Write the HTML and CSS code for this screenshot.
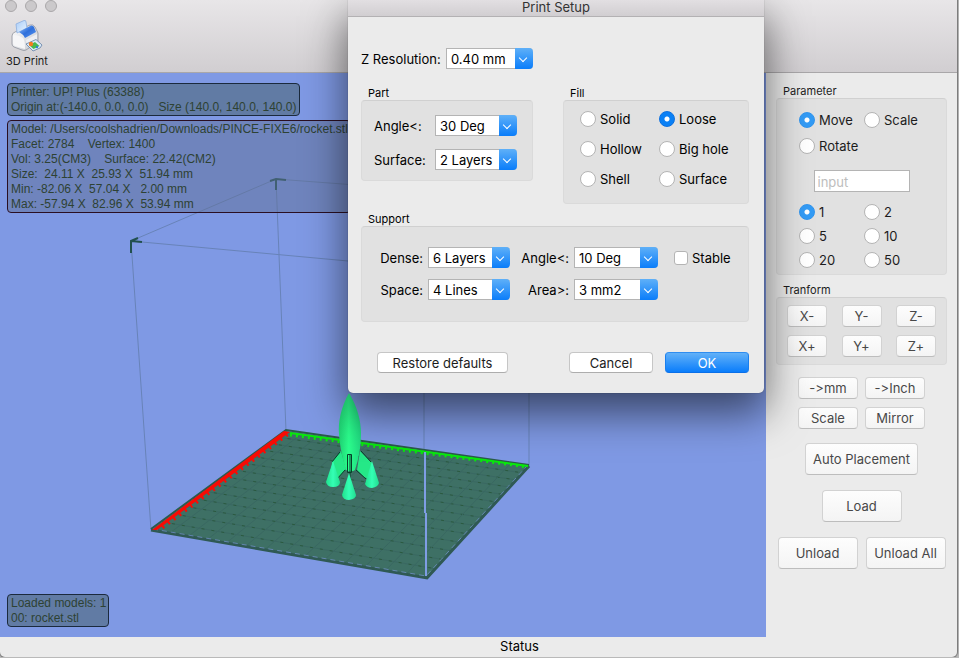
FILE: index.html
```html
<!DOCTYPE html>
<html lang="en">
<head>
<meta charset="utf-8">
<title>UP! Print Setup</title>
<link rel="stylesheet" href="styles.css">
</head>
<body>
<div class="window">
  <header class="toolbar">
    <div class="lights"><i></i><i></i><i></i></div>
    <button class="tool" type="button">
      <svg width="32" height="32" viewBox="0 0 32 32" aria-hidden="true">
        <defs>
          <linearGradient id="paper" x1="0" y1="0" x2="1" y2="1"><stop offset="0" stop-color="#a9cdf8"/><stop offset="1" stop-color="#e9f4ff"/></linearGradient>
          <linearGradient id="lid" x1="0" y1="0" x2="1" y2="1"><stop offset="0" stop-color="#8fc0fb"/><stop offset=".5" stop-color="#2f6fdb"/><stop offset="1" stop-color="#5a98f2"/></linearGradient>
          <linearGradient id="shell" x1="0" y1="0" x2="1" y2="1"><stop offset="0" stop-color="#fff"/><stop offset="1" stop-color="#c3c6ce"/></linearGradient>
        </defs>
        <path d="M1 16 Q1 13 4 12 L19 5 Q22 4 24 7 L27 13 L27 22 L15 30 Q13 31 11 30 L3 27 Q1 26 1 24Z" fill="url(#shell)" stroke="#8f939d" stroke-width=".8"/>
        <path d="M2 15 Q8 15 12 18 Q14 20 14 29 L4 26 Q2 25 2 23Z" fill="#f6f6f8"/>
        <path d="M15 20 L26 14 L26 20 L16 26Z" fill="#eeeff3"/>
        <path d="M5 4 L13 .5 Q15 0 15 2 L16 8 L6 13Z" fill="url(#paper)" stroke="#8cafe0" stroke-width=".8"/>
        <path d="M8 12 L20 5.500 Q22 5 23 7 L25 12 L14 18 Q12 14 8 12Z" fill="url(#lid)"/>
        <path d="M15 24 L25 19.500 L31 25 L29 28 L22 31Z" fill="#dceafa" stroke="#5f7da2" stroke-width=".8"/>
        <path d="M18 25 L24 22 L28.500 26 L22.500 29Z" fill="#49ba4e"/>
        <circle cx="20" cy="24" r="2.200" fill="#f47b20"/>
        <circle cx="26" cy="27" r="1.200" fill="#2f7fd0"/>
      </svg>
      <span>3D Print</span>
    </button>
  </header>

  <main class="main">
    <section class="viewport">
      <svg class="scene" viewBox="0 73 766 564" aria-hidden="true">
        <defs>
          <linearGradient id="hull" x1="0" x2="1"><stop offset="0" stop-color="#1fd273"/><stop offset=".45" stop-color="#2cff8e"/><stop offset="1" stop-color="#1fd880"/></linearGradient>
          <linearGradient id="foot" x1="0" x2="1"><stop offset="0" stop-color="#20e08c"/><stop offset=".5" stop-color="#34ffb4"/><stop offset="1" stop-color="#22dd90"/></linearGradient>
        </defs>
        <g class="cage">
          <path d="M151 530 L131 241 L276 179 L286 431"/>
          <path d="M276 179 L529 198 V466"/>
          <path d="M131 241 L424 268 V451"/>
        </g>
        <g class="arrows">
          <path d="M270 181 L276 179 L286 180 M276 179 V190"/>
          <path d="M131 253 V241 L138 238 M131 241 L142 242"/>
        </g>
        <polygon class="plate" points="151,530 286,431 529,466 427,578"/>
        <g id="grid" class="grid"></g>
        <path class="rim" d="M151 530 L427 578 L529 466"/>
        <path class="glint" d="M153 529 L426 576 L527 466"/>
        <path class="back" d="M151 529 L286 430 L529 465"/>
        <polygon class="red" points="152,530 284,431 290,432 157,530"/>
        <path class="red-ticks" d="M162 527 L287 434"/>
        <path class="green" d="M290 433 L528 466"/>
        <path class="green-ticks" d="M290 435 L528 467"/>
        <path class="post" d="M425 452 V513 M426 513 V576"/>
        <g class="rocket">
          <path class="fin" d="M341 451 L332 462 L331 477 L337 479 L346 469Z"/>
          <path class="fin" d="M360 451 L372 463 L371 480 L364 477 L357 470Z"/>
          <path class="fin-edge" d="M340 452 L332 462 M337 479 L345 470 M361 451 L371 462 M366 479 L356 470"/>
          <path class="hull" d="M349 393 C341 407 338 422 339 434 C340 448 343 460 346 470 Q350 473 355 470 C359 458 361 446 361 434 C361 420 357 406 349 393Z"/>
          <path class="foot" d="M333 461 L326 482 Q327 487 333 487 Q340 487 340 482Z"/>
          <path class="foot" d="M372 461 L365 484 Q367 488 372 488 Q378 487 379 483Z"/>
          <path class="fin-edge" d="M347.500 454.500 H351.500 V472.500 H347.500Z M350 455 V479"/>
          <path class="foot" d="M349 473 L342 495 Q343 500 349 500 Q356 499 356 495Z"/>
        </g>
      </svg>
      <div class="info printer">Printer: UP! Plus (63388)
Origin at:(-140.0, 0.0, 0.0)   Size (140.0, 140.0, 140.0)</div>
      <div class="info model">Model: /Users/coolshadrien/Downloads/PINCE-FIXE6/rocket.stl
Facet: 2784    Vertex: 1400
Vol: 3.25(CM3)    Surface: 22.42(CM2)
Size:  24.11 X  25.93 X  51.94 mm
Min: -82.06 X  57.04 X   2.00 mm
Max: -57.94 X  82.96 X  53.94 mm</div>
      <div class="info loaded">Loaded models: 1
00: rocket.stl</div>
    </section>

    <aside class="sidebar">
      <fieldset>
        <legend>Parameter</legend>
        <div class="group parameter">
          <div class="radios modes">
            <label><input type="radio" name="mode" checked>Move</label>
            <label><input type="radio" name="mode">Scale</label>
            <label><input type="radio" name="mode">Rotate</label>
          </div>
          <input class="value" type="text" placeholder="input" aria-label="Value">
          <div class="radios steps">
            <label><input type="radio" name="step" checked>1</label>
            <label><input type="radio" name="step">2</label>
            <label><input type="radio" name="step">5</label>
            <label><input type="radio" name="step">10</label>
            <label><input type="radio" name="step">20</label>
            <label><input type="radio" name="step">50</label>
          </div>
        </div>
      </fieldset>
      <fieldset>
        <legend>Tranform</legend>
        <div class="group axes">
          <button type="button">X-</button><button type="button">Y-</button><button type="button">Z-</button>
          <button type="button">X+</button><button type="button">Y+</button><button type="button">Z+</button>
        </div>
      </fieldset>
      <div class="units">
        <button type="button">-&gt;mm</button><button type="button">-&gt;Inch</button>
        <button type="button">Scale</button><button type="button">Mirror</button>
      </div>
      <div class="files">
        <button class="auto" type="button">Auto Placement</button>
        <button type="button">Load</button>
        <div class="pair"><button type="button">Unload</button><button type="button">Unload All</button></div>
      </div>
    </aside>
  </main>
  <footer class="status">Status</footer>

  <form class="dialog" role="dialog" aria-labelledby="dialog-title">
    <h1 id="dialog-title">Print Setup</h1>
    <div class="dialog-body">
      <div class="resolution">
        <label for="z">Z Resolution:</label>
        <span class="combo"><select id="z"><option>0.40 mm</option></select></span>
      </div>
      <div class="columns">
        <fieldset>
          <legend>Part</legend>
          <div class="group part">
            <label for="part-angle">Angle&lt;:</label>
            <span class="combo"><select id="part-angle"><option>30 Deg</option></select></span>
            <label for="part-surface">Surface:</label>
            <span class="combo"><select id="part-surface"><option>2 Layers</option></select></span>
          </div>
        </fieldset>
        <fieldset>
          <legend>Fill</legend>
          <div class="group radios fill">
            <label><input type="radio" name="fill">Solid</label>
            <label><input type="radio" name="fill" checked>Loose</label>
            <label><input type="radio" name="fill">Hollow</label>
            <label><input type="radio" name="fill">Big hole</label>
            <label><input type="radio" name="fill">Shell</label>
            <label><input type="radio" name="fill">Surface</label>
          </div>
        </fieldset>
      </div>
      <fieldset>
        <legend>Support</legend>
        <div class="group support">
          <label for="dense">Dense:</label>
          <span class="combo"><select id="dense"><option>6 Layers</option></select></span>
          <label for="angle">Angle&lt;:</label>
          <span class="combo wide"><select id="angle"><option>10 Deg</option></select></span>
          <label class="check"><input type="checkbox">Stable</label>
          <label for="space">Space:</label>
          <span class="combo"><select id="space"><option>4 Lines</option></select></span>
          <label for="area">Area&gt;:</label>
          <span class="combo wide"><select id="area"><option>3 mm2</option></select></span>
        </div>
      </fieldset>
      <div class="actions">
        <button class="restore" type="button">Restore defaults</button>
        <button type="button">Cancel</button>
        <button class="primary" type="submit">OK</button>
      </div>
    </div>
  </form>
</div>
<script src="scene.js"></script>
</body>
</html>
```
FILE: styles.css
```css
* { box-sizing: border-box; }

body {
  margin: 0;
  background: #b9b9b9;
  font: 13px/16px Inter, "Liberation Sans", sans-serif;
  font-feature-settings: "calt" 0;
  color: #1c1c1c;
}

button, input, select { font: inherit; font-feature-settings: inherit; color: inherit; }

.window {
  position: relative;
  display: flex;
  flex-direction: column;
  min-height: calc(100vh - 1px);
  margin-right: 2px;
  overflow: hidden;
  background: #ebebeb;
  border-radius: 0 0 5px 5px;
  box-shadow: 0 0 1px 1px #777;
}

/* Toolbar */
.toolbar {
  height: 73px;
  background: linear-gradient(#e8e6e8, #d1ced1);
  border-bottom: 1px solid #a9a7a9;
}

.lights { display: flex; gap: 8px; height: 12px; padding-left: 5px; }
.lights i {
  width: 12px;
  height: 12px;
  border: 1px solid #aaa8aa;
  border-radius: 50%;
  background: #cbc9cb;
}

.tool {
  display: flex;
  flex-direction: column;
  align-items: center;
  margin: 8px 0 0 6px;
  padding: 0;
  border: 0;
  background: none;
  font-size: 11px;
  line-height: 16px;
}
.tool svg { margin-bottom: 1px; }

/* 3D view */
.main { flex: 1; display: flex; }

.viewport {
  position: relative;
  flex: 1;
  display: flex;
  flex-direction: column;
  align-items: flex-start;
  padding: 10px 7px;
  background: #7f99e4;
}

.scene { position: absolute; inset: 0; width: 100%; height: 100%; }
.scene path { fill: none; }
.scene .cage path { stroke: #6883b8; }
.scene .arrows path { stroke: #22504f; stroke-width: 2; }
.scene .plate { fill: #3e7065; }
.scene .grid line { stroke: #3a6862; }
.scene .grid line.dotted { stroke: #2b5a40; stroke-dasharray: 3 7; }
.scene .rim { stroke: #2f5954; stroke-width: 3; }
.scene .glint { stroke: #7f99e4; stroke-dasharray: 5 4; opacity: .6; }
.scene .back { stroke: #2b5a4b; stroke-width: 2; }
.scene .red { fill: #f80b04; }
.scene .red-ticks { stroke: #f80b04; stroke-width: 5; stroke-dasharray: 2 5; }
.scene .green { stroke: #08e80c; stroke-width: 2; }
.scene .green-ticks { stroke: #08e80c; stroke-width: 3; stroke-dasharray: 2 4; }
.scene .post { stroke: #7f9de4; stroke-width: 2; }
.scene .fin { fill: #25e887; }
.scene .fin-edge { stroke: #06402a; }
.scene .hull { fill: url(#hull); }
.scene .foot { fill: url(#foot); }

.info {
  position: relative;
  padding: 1px 2px 0 3px;
  border: 1px solid #1b2a3d;
  border-radius: 4px;
  background: rgba(68, 94, 99, .5);
  font: 12px/15px "Liberation Sans", Arial, sans-serif;
  color: #2e4233;
  white-space: pre;
}
.printer { margin-bottom: 4px; }
.model { background: rgba(96, 112, 150, .5); border-color: #2a0f22; }
.loaded { margin-top: auto; }

/* Grouped boxes */
fieldset { min-width: 0; margin: 0; padding: 0; border: 0; }
legend { padding: 0 0 0 7px; font-size: 11px; line-height: 13px; }
.group {
  border: 1px solid #dadada;
  border-top-color: #d0d0d0;
  border-radius: 4px;
  background: #e1e1e1;
}

.radios { display: grid; }
.radios label, .check { display: flex; align-items: center; gap: 4px; height: 16px; }
input[type="radio"], input[type="checkbox"] {
  appearance: none;
  flex: none;
  width: 16px;
  height: 16px;
  margin: 0;
  border: 1px solid #b4b4b4;
  border-radius: 50%;
  background: #fff;
}
input[type="checkbox"] { width: 14px; height: 14px; border-radius: 3px; }
input[type="radio"]:checked {
  border-color: #0a6fe0;
  background: radial-gradient(circle, #fff 2px, #0a80f5 3px);
}
.sidebar input[type="radio"]:checked {
  border-color: #3094ee;
  background: radial-gradient(circle, #fff 2px, #339bf5 3px);
}

/* Sidebar */
.sidebar { width: 191px; padding: 12px 10px; }
.sidebar fieldset { margin-bottom: 9px; }

.parameter { padding: 13px 22px 6px; }
.parameter .radios { grid-template-columns: 65px auto; }
.modes { row-gap: 10px; }
.steps { row-gap: 8px; }
.value {
  display: block;
  width: 96px;
  height: 22px;
  margin: 16px auto 12px;
  padding: 2px 3px 0;
  border: 1px solid #b4b4b4;
  background: #fff;
}
.value::placeholder { color: #bdbdbd; opacity: 1; }

button { cursor: default; }
.sidebar button {
  height: 22px;
  padding: 0;
  border: 1px solid #d2d2d2;
  border-bottom-color: #bdbdbd;
  border-radius: 4px;
  background: linear-gradient(#fdfdfd, #f4f4f4);
  color: #484848;
}
.axes {
  display: grid;
  grid-template-columns: repeat(3, 40px);
  justify-content: space-between;
  row-gap: 8px;
  padding: 7px 10px;
}
.units {
  display: grid;
  grid-template-columns: repeat(2, 60px);
  justify-content: center;
  gap: 8px 7px;
  margin: 12px 0 14px;
}
.files { display: flex; flex-direction: column; align-items: center; gap: 15px; }
.sidebar .files button { width: 80px; height: 32px; }
.sidebar .files .auto { width: 113px; }
.pair { display: flex; gap: 8px; }

.status { height: 20px; padding: 1px 0 0 82px; text-align: center; color: #000; }

/* Print setup sheet */
.dialog {
  position: absolute;
  top: 0;
  left: 348px;
  width: 416px;
  border-radius: 0 0 5px 5px;
  background: #ebebeb;
  box-shadow: 0 0 1px rgba(0, 0, 0, .5), 0 18px 42px 2px rgba(0, 0, 0, .55);
  color: #000;
}
.dialog h1 {
  height: 17px;
  margin: 0;
  border-bottom: 1px solid #b3b1b3;
  background: linear-gradient(#e2dfe2, #d1ced1);
  font-size: 13px;
  font-weight: 400;
  line-height: 14px;
  text-align: center;
  color: #333;
}
.dialog-body { padding: 31px 15px 20px 13px; }

.resolution { display: flex; align-items: center; margin-bottom: 18px; }
.resolution label { width: 85px; }

.combo { position: relative; display: block; width: 82px; height: 21px; }
.combo.wide { width: 84px; }
.resolution .combo { width: 87px; }
.combo select {
  display: block;
  appearance: none;
  width: 100%;
  height: 100%;
  padding: 1px 18px 0 4px;
  border: 1px solid #b4b4b4;
  border-right: 0;
  border-radius: 0 4px 4px 0;
  background: #fff;
  color: #000;
}
.combo::before {
  content: "";
  position: absolute;
  top: 0;
  right: 0;
  bottom: 0;
  width: 18px;
  border-radius: 0 4px 4px 0;
  background: linear-gradient(#5fb0f8, #0a7dfa);
  pointer-events: none;
}
.combo::after {
  content: "";
  position: absolute;
  top: 7px;
  right: 7px;
  width: 5px;
  height: 5px;
  border: solid #fff;
  border-width: 0 1px 1px 0;
  transform: rotate(45deg);
  pointer-events: none;
}

.columns { display: flex; justify-content: space-between; align-items: flex-start; margin-bottom: 9px; }
.part {
  display: grid;
  grid-template-columns: 61px 82px;
  align-items: center;
  row-gap: 13px;
  padding: 14px 15px 10px 12px;
}
.fill {
  grid-template-columns: 79px 74px;
  row-gap: 14px;
  padding: 10px 15px 16px 16px;
}
.support {
  display: grid;
  grid-template-columns: 66px 82px 64px 84px auto;
  align-items: center;
  row-gap: 11px;
  padding: 20px 0 21px;
}
.support > label:not(.check) { padding-right: 5px; text-align: right; }
.check { margin-left: 16px; }

.actions { display: flex; gap: 12px; margin: 30px 0 0 16px; }
.actions button {
  width: 84px;
  height: 21px;
  padding: 0;
  border: 1px solid #c6c6c6;
  border-bottom-color: #adadad;
  border-radius: 4px;
  background: #fff;
  color: #1c1c1c;
}
.actions .restore { width: 131px; margin-right: auto; }
.actions .primary {
  border-color: #2f8df0 #1a7fee #0a6fe8;
  background: linear-gradient(#62b1f8, #0a7dfb);
  color: #fff;
}
```
FILE: scene.js
```js
// Draws the build plate grid: a 140 mm square with a line every 10 mm, in perspective.
const left = [151, 530], back = [286, 431], right = [529, 466], front = [427, 578];
const cells = 14;

function projector(p0, p1, p2, p3) {
  const dx1 = p1[0] - p2[0], dx2 = p3[0] - p2[0], dx3 = p0[0] - p1[0] + p2[0] - p3[0];
  const dy1 = p1[1] - p2[1], dy2 = p3[1] - p2[1], dy3 = p0[1] - p1[1] + p2[1] - p3[1];
  const det = dx1 * dy2 - dx2 * dy1;
  const g = (dx3 * dy2 - dx2 * dy3) / det, h = (dx1 * dy3 - dx3 * dy1) / det;
  return (u, v) => {
    const w = g * u + h * v + 1;
    return [0, 1].map(i =>
      ((p1[i] - p0[i] + g * p1[i]) * u + (p3[i] - p0[i] + h * p3[i]) * v + p0[i]) / w);
  };
}

const project = projector(back, right, front, left);
const grid = document.getElementById('grid');

function addLine(a, b, name) {
  const line = document.createElementNS('http://www.w3.org/2000/svg', 'line');
  line.setAttribute('x1', a[0]);
  line.setAttribute('y1', a[1]);
  line.setAttribute('x2', b[0]);
  line.setAttribute('y2', b[1]);
  if (name) line.setAttribute('class', name);
  grid.append(line);
}

for (let i = 1; i < cells; i++) {
  const t = i / cells;
  addLine(project(t, 0), project(t, 1));
  addLine(project(0, t), project(1, t));
  addLine(project(0, t), project(1, t), 'dotted');
}
```
